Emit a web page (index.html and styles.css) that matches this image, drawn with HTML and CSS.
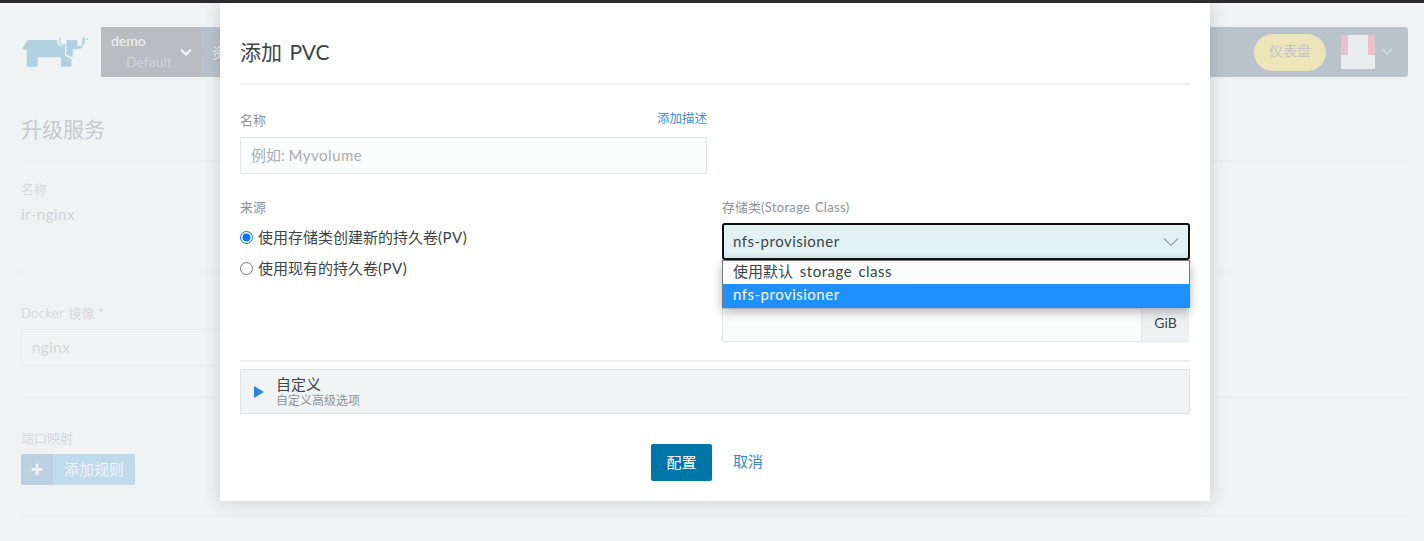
FILE: index.html
```html
<!DOCTYPE html>
<html lang="zh">
<head>
<meta charset="utf-8">
<title>添加 PVC</title>
<link rel="stylesheet" href="styles.css">
</head>
<body>
<div class="topline"></div>
<header class="header">
  <svg class="logo" viewBox="22 35 66 34" aria-hidden="true">
    <path class="logo-fill" d="M22 49 L27.5 40 H57.5 V44 Q57.5 46 60 46 H65 V55 Q65 56 67 57 L71.5 59 V66.7 H61 V57.3 H37.7 V66.7 H26.7 V50 Z"/>
    <path class="logo-fill" d="M59.3 37 L60.5 37 V44.3 H66.7 V40 H77.3 V46 H81.7 L82.7 37.3 H84.7 V43.3 L81.7 48.3 L77.3 49.3 H72.7 V57.3 L66.5 54.7 V45.5 H61 Q59.3 45.5 59.3 44 Z"/>
    <circle class="logo-fill" cx="87" cy="39" r="1"/>
  </svg>
  <div class="nav">
    <div class="env">
      <div class="env-text"><span class="env-name">demo</span><span class="env-sub">Default</span></div>
      <svg class="env-caret" viewBox="0 0 12 8" aria-hidden="true"><path d="M1 1.5 L6 6.5 L11 1.5"/></svg>
    </div>
    <div class="nav-main">
      <span class="nav-item">资源</span>
      <div class="nav-right">
        <span class="dash">仪表盘</span>
        <span class="avatar"><i></i><i></i></span>
        <svg class="user-caret" viewBox="0 0 12 8" aria-hidden="true"><path d="M1 1 L6 6 L11 1"/></svg>
      </div>
    </div>
  </div>
</header>

<main class="page">
  <h1 class="page-title">升级服务</h1>
  <section class="sec sec-name">
    <div class="bg-label">名称</div>
    <div class="bg-value">ir-nginx</div>
  </section>
  <section class="sec sec-image">
    <div class="bg-label"><span class="wide-sm">Docker 镜像</span> <em>*</em></div>
    <div class="bg-input">nginx</div>
  </section>
  <section class="sec sec-ports">
    <div class="bg-label">端口映射</div>
    <div class="add-rule"><span class="add-plus">✚</span><span class="add-text">添加规则</span></div>
  </section>
</main>

<div class="modal">
  <h2 class="modal-title">添加 PVC</h2>
  <div class="grid grid-name">
    <div>
      <div class="label-row"><label class="label">名称</label><a class="link-sm">添加描述</a></div>
      <div class="input placeholder">例如: <span class="wide">Myvolume</span></div>
    </div>
    <div></div>
  </div>
  <div class="grid grid-source">
    <div>
      <label class="label">来源</label>
      <label class="radio radio-first"><input type="radio" name="src" checked>使用存储类创建新的持久卷<span class="wide">(PV)</span></label>
      <label class="radio"><input type="radio" name="src">使用现有的持久卷<span class="wide">(PV)</span></label>
    </div>
    <div>
      <label class="label">存储类<span class="wide-sm">(Storage Class)</span></label>
      <div class="select-wrap">
        <div class="select"><span class="wide">nfs-provisioner</span>
          <svg class="select-caret" viewBox="0 0 16 10" aria-hidden="true"><path d="M1 1.5 L8 8.5 L15 1.5"/></svg>
        </div>
        <ul class="options">
          <li class="opt-default">使用默认 <span class="wide">storage class</span></li>
          <li class="selected"><span class="wide">nfs-provisioner</span></li>
        </ul>
      </div>
      <div class="size-group"><div class="size-input"></div><div class="size-unit">GiB</div></div>
    </div>
  </div>
  <div class="accordion">
    <span class="tri"></span>
    <div>
      <div class="acc-title">自定义</div>
      <div class="acc-sub">自定义高级选项</div>
    </div>
  </div>
  <div class="actions">
    <button class="btn-primary">配置</button>
    <a class="cancel">取消</a>
  </div>
</div>
</body>
</html>
```
FILE: styles.css
```css
* { box-sizing: border-box; }
html, body { margin: 0; height: 541px; overflow: hidden; }
body {
  background: #eff3f4;
  font-family: Lato, "Noto Sans CJK SC", sans-serif;
  position: relative;
  color: #4a4f52;
}
.wide { letter-spacing: .5px; word-spacing: 2px; }
.wide-sm { letter-spacing: .3px; word-spacing: 1px; }
.topline { height: 3px; background: #2c2c2e; }

.header {
  display: flex;
  align-items: center;
  padding: 24px 16px 0 22px;
}
.logo { width: 66px; height: 34px; margin-right: 13px; }
.logo-fill { fill: #b1d1e0; }
.nav { display: flex; flex: 1; height: 50px; border-radius: 0 3px 3px 0; overflow: hidden; }
.env {
  width: 100px;
  background: #b9bdc1;
  display: flex;
  align-items: center;
  padding-left: 10px;
  position: relative;
}
.env::after {
  content: "";
  position: absolute;
  left: 100%;
  top: 20px;
  border-style: solid;
  border-width: 5px 0 5px 5px;
  border-color: transparent transparent transparent #b9bdc1;
}
.env-text { display: flex; flex-direction: column; font-size: 14px; line-height: 21px; margin-top: -2px; }
.env-name { color: #eef1f3; }
.env-sub { color: #cfd3d6; padding-left: 15px; }
.env-caret { width: 12px; height: 8px; margin-left: 8px; fill: none; stroke: #f1f3f4; stroke-width: 2.4; }
.nav-main {
  flex: 1;
  background: #b9c3cc;
  display: flex;
  align-items: center;
  padding-left: 11px;
  justify-content: space-between;
}
.nav-item { color: #e7ebee; font-size: 14px; }
.nav-right { display: flex; align-items: center; }
.dash {
  width: 72px;
  height: 37px;
  border-radius: 19px;
  background: #ede4ba;
  color: #c4c6bf;
  font-size: 14px;
  line-height: 34px;
  text-align: center;
  margin-right: 15px;
}
.avatar {
  width: 34px;
  height: 34px;
  background: #eaedef;
  position: relative;
  display: flex;
  justify-content: space-between;
  margin-right: 6px;
}
.avatar i { width: 7px; height: 20px; background: #ebc0cd; }
.user-caret { width: 12px; height: 8px; margin-right: 15px; fill: none; stroke: #cfd8dc; stroke-width: 1.8; }

.page { padding: 0 16px 0 21px; }
.page-title {
  font-weight: 400;
  font-size: 21px;
  line-height: 30px;
  color: #c6cacd;
  margin: 37px 0 16px;
}
.sec { border-top: 2px solid #ebeff1; }
.sec-name { height: 111px; padding-top: 18px; }
.sec-image { height: 125px; padding-top: 31px; }
.sec-ports { height: 121px; padding-top: 31px; border-bottom: 2px solid #ebeff1; }
.bg-label { color: #d6d9dc; font-size: 13px; line-height: 18px; }
.bg-label em { color: #efc9c9; font-style: normal; }
.bg-value { color: #cfd3d6; font-size: 15px; line-height: 22px; margin-top: 5px; letter-spacing: .5px; }
.bg-input {
  width: 300px;
  height: 37px;
  margin-top: 7px;
  border: 1px solid #e7ebed;
  padding-left: 10px;
  line-height: 34px;
  font-size: 15px;
  color: #d2d6d8;
  letter-spacing: .5px;
}
.add-rule {
  width: 114px;
  height: 31px;
  margin-top: 7px;
  display: flex;
  background: #c0daed;
  border-radius: 2px;
  overflow: hidden;
  color: #edf3f7;
}
.add-plus { width: 32px; background: #bbd0e0; text-align: center; line-height: 31px; font-size: 13px; }
.add-text { padding-left: 11px; font-size: 15px; line-height: 31px; }

.modal {
  position: absolute;
  left: 220px;
  top: 3px;
  width: 990px;
  height: 498px;
  background: #fff;
  padding: 0 20px;
  box-shadow: 0 0 16px rgba(40, 50, 60, .2);
  color: #3c4448;
}
.modal-title {
  margin: 0 0 24px;
  height: 82px;
  padding-top: 33px;
  font-weight: 400;
  font-size: 21px;
  line-height: 32px;
  word-spacing: 2px;
  border-bottom: 2px solid #eef0f0;
}
.grid { display: grid; grid-template-columns: 467px 468px; column-gap: 15px; }
.grid-name { height: 89px; }
.label-row { display: flex; justify-content: space-between; align-items: flex-start; height: 28px; padding-top: 2px; }
.label { display: block; color: #8f9396; font-size: 13px; line-height: 18px; }
.link-sm { color: #3d8fd6; font-size: 12.5px; line-height: 16px; }
.input {
  height: 37px;
  border: 1px solid #e1e5e7;
  background: #fbfcfc;
  padding-left: 10px;
  font-size: 15px;
  line-height: 34px;
}
.placeholder { color: #a9adb0; }
.radio { display: flex; align-items: center; font-size: 15px; line-height: 20px; color: #3c4448; }
.radio input { margin: 0 5px 0 0; width: 13px; height: 13px; }
.radio-first { margin-top: 11px; margin-bottom: 11px; }
.select-wrap { position: relative; margin-top: 7px; }
.select {
  height: 37px;
  border: 2px solid #111;
  border-radius: 3px;
  background: linear-gradient(#e2f2f3 80%, #d9e9ea);
  padding-left: 9px;
  font-size: 15px;
  line-height: 33px;
  position: relative;
  color: #3c4448;
}
.select-caret { position: absolute; right: 9px; top: 12px; width: 16px; height: 10px; fill: none; stroke: #9aa3a7; stroke-width: 1.2; }
.options {
  position: absolute;
  left: 0;
  right: 0;
  top: 37px;
  margin: 0;
  padding: 0;
  list-style: none;
  background: #fbfdfc;
  border: 1px solid #767676;
  box-shadow: 0 4px 10px rgba(0, 0, 0, .28);
  font-size: 15px;
  line-height: 21px;
  z-index: 2;
}
.options li { height: 23px; padding-left: 10px; }
.options .opt-default { word-spacing: 3px; }
.options .selected { background: #1e90ff; color: #fff; }
.size-group { display: flex; height: 35px; margin-top: 48px; }
.size-input { flex: 1; border: 1px solid #e1e5e7; background: #fbfcfc; height: 34px; }
.size-unit { width: 47px; background: #eef1f1; font-size: 14px; line-height: 30px; text-align: center; margin-right: 1px; }
.grid-source { height: 164px; border-bottom: 2px solid #eef0f0; }
.accordion {
  margin-top: 7px;
  height: 45px;
  border: 1px solid #dde3e5;
  background: #f0f3f4;
  display: flex;
  align-items: center;
  padding-left: 13px;
}
.tri {
  width: 0; height: 0;
  border-style: solid;
  border-width: 6px 0 6px 10px;
  border-color: transparent transparent transparent #2d86cf;
  margin-right: 12px;
}
.acc-title { font-size: 15px; line-height: 18px; color: #3c4448; margin-top: 1px; }
.acc-sub { font-size: 12px; line-height: 16px; color: #8f9396; }
.actions { display: flex; justify-content: center; align-items: center; margin-top: 30px; gap: 21px; padding-right: 16px; }
.btn-primary {
  width: 61px;
  height: 37px;
  border: 0;
  border-radius: 2px;
  background: #0075a8;
  color: #fff;
  padding: 0 0 3px;
  font: 15px Lato, "Noto Sans CJK SC", sans-serif;
}
.cancel { color: #3d87c9; font-size: 15px; margin-top: -4px; }
```
